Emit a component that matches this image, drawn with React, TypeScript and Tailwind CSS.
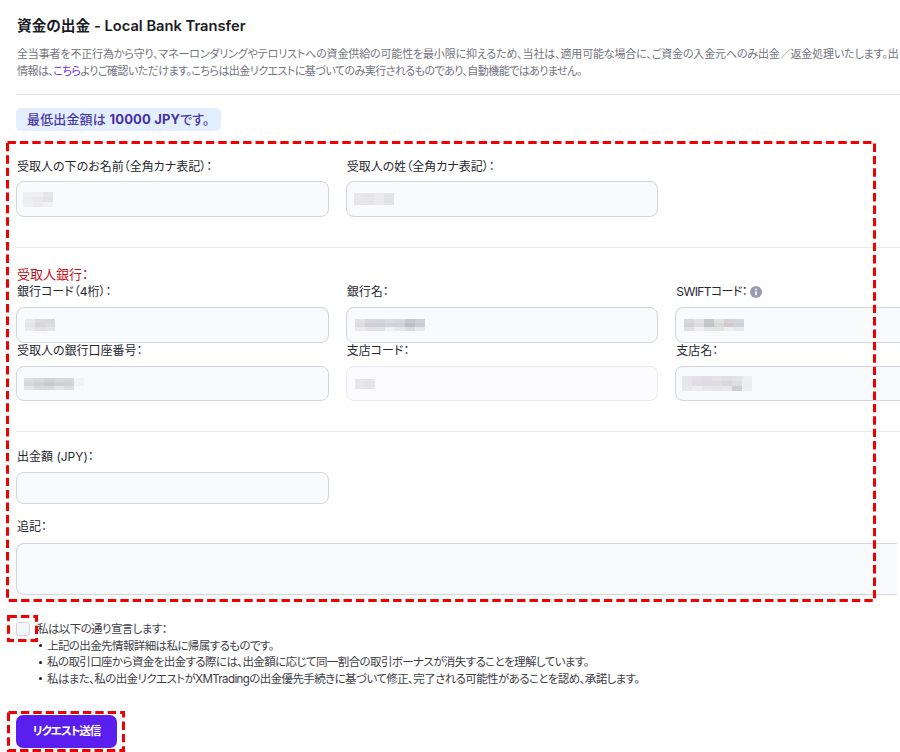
import type { ReactNode } from 'react';

type MosaicProps = {
  cell: [number, number];
  rows: string[][];
};

// pixelated patch that hides the personal data in the inputs
function Mosaic({ cell, rows }: MosaicProps) {
  const [w, h] = cell;
  return (
    <svg width={rows[0].length * w} height={rows.length * h} shapeRendering="crispEdges" className="block">
      {rows.map((row, y) =>
        row.map((c, x) => <rect key={`${x}-${y}`} x={x * w} y={y * h} width={w} height={h} fill={c} />),
      )}
    </svg>
  );
}

function Label({ children }: { children: ReactNode }) {
  return <label className="block pl-px text-[12px] leading-[16px] text-[#27272f]">{children}</label>;
}

function Field({
  label,
  pad = 'pl-[6px]',
  className = 'h-[36px]',
  gap = 'mt-[7px]',
  disabled,
  children,
}: {
  label: ReactNode;
  pad?: string;
  className?: string;
  gap?: string;
  disabled?: boolean;
  children?: ReactNode;
}) {
  return (
    <div className="flex flex-col">
      <Label>{label}</Label>
      <div
        className={`${className} ${pad} ${gap} flex items-center rounded-[8px] border ${
          disabled ? 'border-[#e9e9ef] bg-[#fcfcfe]' : 'border-[#d2d3de] bg-[#f9fafc]'
        }`}
      >
        {children}
      </div>
    </div>
  );
}

// red annotation frame drawn over the page
function Frame({ className, w, h }: { className: string; w: number; h: number }) {
  return (
    <svg className={`absolute ${className}`} width={w} height={h}>
      <rect x={1.5} y={1.5} width={w - 3} height={h - 3} fill="none" stroke="#f00000" strokeWidth={3} strokeDasharray="8.4 4" />
    </svg>
  );
}

const declarations = [
  '上記の出金先情報詳細は私に帰属するものです。',
  '私の取引口座から資金を出金する際には、出金額に応じて同一割合の取引ボーナスが消失することを理解しています。',
  '私はまた、私の出金リクエストがXMTradingの出金優先手続きに基づいて修正、完了される可能性があることを認め、承諾します。',
];

export default function App() {
  return (
    <div className="relative h-[752px] w-[900px] overflow-hidden bg-white font-['Inter','Noto_Sans_CJK_JP',sans-serif] [font-feature-settings:'palt']">
      <div className="w-[988px] pl-4">
        <h1 className="pt-[17px] pl-px text-[14.7px] leading-[18px] font-semibold text-[#1c1c24]">
          資金の出金 - Local Bank Transfer
        </h1>
        <p className="mt-[11px] pl-px text-[11px] leading-[17px] tracking-[-0.55px] whitespace-nowrap text-[#74747e]">
          <span className="tracking-[-0.15px]">
            全当事者を不正行為から守り、マネーロンダリングやテロリストへの資金供給の可能性を最小限に抑えるため、当社は、適用可能な場合に、ご資金の入金元へのみ出金／返金処理いたします。出
          </span>
          <br />
          情報は、<span className="text-[#6a2bea]">こちら</span>
          よりご確認いただけます。こちらは出金リクエストに基づいてのみ実行されるものであり、自動機能ではありません。
        </p>
        <hr className="mt-[14px] border-[#e5e5ec]" />

        <div className="mt-[13px] flex h-[23px] w-[205px] items-center rounded-[5px] bg-[#e3eeff] pl-[11px] text-[13px] font-medium tracking-[0.15px] text-[#4a3aa8]">
          最低出金額は&nbsp;<span className="font-bold text-[#43309f]">10000 JPY</span>です。
        </div>

        <div className="mt-[28px] grid grid-cols-3 gap-x-[17px]">
          <Field label="受取人の下のお名前（全角カナ表記）：" gap="mt-[6px]">
            <Mosaic
              cell={[10, 5]}
              rows={[
                ['#f0f0f3', '#f0f0f3', '#e6e6ea'],
                ['#ececf0', '#e9e9ed', '#e2e2e6'],
                ['#efeff2', '#ebebef', '#f0f0f3'],
              ]}
            />
          </Field>
          <Field label="受取人の姓（全角カナ表記）：" gap="mt-[6px]" pad="pl-[7px]">
            <Mosaic
              cell={[10, 6]}
              rows={[
                ['#e8e8ec', '#e6e6ea', '#ebebef', '#e4e4e8'],
                ['#e6e6ea', '#e5e5e9', '#e9e9ed', '#e2e2e6'],
              ]}
            />
          </Field>
        </div>

        <hr className="mt-[30px] border-[#e8e8ec]" />

        <h2 className="mt-[17px] pl-px text-[13px] leading-[19px] text-[#c0141c]">受取人銀行：</h2>
        <div className="grid grid-cols-3 gap-x-[17px]">
          <Field label="銀行コード（4桁）：" pad="pl-[8px]">
            <Mosaic
              cell={[10, 4]}
              rows={[
                ['#e8e8ec', '#dcdce0', '#d9d9dd'],
                ['#e4e4e8', '#d6d6da', '#dcdce0'],
                ['#eaeaee', '#e0e0e4', '#e4e4e8'],
              ]}
            />
          </Field>
          <Field label="銀行名：" pad="pl-[8px]">
            <Mosaic
              cell={[10, 4]}
              rows={[
                ['#e2e2e6', '#d8d6da', '#d4d6dc', '#dcdce0', '#d8d8dc', '#c8c8cc', '#ccd0d8'],
                ['#dcdce0', '#cfcdd2', '#cdd0d6', '#d4d4d8', '#d2d2d6', '#bfbfc3', '#c8ccd4'],
                ['#eaeaee', '#e2e0e4', '#dfe1e6', '#f0f0f3', '#e6e6ea', '#dcdce0', '#e6e8ec'],
              ]}
            />
          </Field>
          <Field
            label={
              <span className="flex items-center">
                <span className="tracking-[-0.6px]">SWIFTコード：</span>
                <svg viewBox="0 0 12 12" className="ml-[3px] size-3">
                  <circle cx="6" cy="6" r="6" fill="#9a9db2" />
                  <rect x="5.2" y="2.6" width="1.6" height="1.6" fill="#fff" />
                  <rect x="5.2" y="5.2" width="1.6" height="4" fill="#fff" />
                </svg>
              </span>
            }
            pad="pl-[8px]"
          >
            <Mosaic
              cell={[10, 4]}
              rows={[
                ['#d9d9dc', '#e2e2e5', '#c8c8cc', '#e0e0e3', '#d8d2d6', '#d0d8dc'],
                ['#d2d2d6', '#dcdcdf', '#c2c2c6', '#d8dad8', '#d0cace', '#c8d2d8'],
                ['#e0e0e3', '#eeeef0', '#e4e4e7', '#e2e4e2', '#eeeef0', '#e6e8ec'],
              ]}
            />
          </Field>
          <Field label="受取人の銀行口座番号：" pad="pl-[7px]" className="h-[35px]">
            <Mosaic
              cell={[10, 4]}
              rows={[
                ['#dededf', '#d9d9dc', '#d4d4d8', '#d8d8dc', '#d8d8dc', '#f4f4f6'],
                ['#d6d6da', '#d0d0d4', '#c9c9cd', '#cfcfd3', '#d2d2d6', '#f2f2f5'],
                ['#e4e4e8', '#dcdce0', '#dadade', '#e4e4e6', '#dedee2', '#f8f8fa'],
              ]}
            />
          </Field>
          <Field label="支店コード：" pad="pl-[8px]" className="h-[35px]" disabled>
            <Mosaic cell={[10, 10]} rows={[['#e6e6ea', '#e4e4e8']]} />
          </Field>
          <Field label="支店名：" pad="pl-[6px]" className="h-[35px]">
            <Mosaic
              cell={[10, 5]}
              rows={[
                ['#e6e6ea', '#e2dfe5', '#dfdce3', '#e4e4e6', '#e0e0e4', '#e4e4e8', '#eeeef1'],
                ['#e6e6ea', '#e0dde4', '#dedbe2', '#dddedd', '#d8d8dc', '#dedee2', '#ecedf0'],
                ['#e8e8ec', '#eeeef1', '#e8e8ec', '#e6e6e9', '#e8e8ec', '#cfcfd3', '#eeeef1'],
              ]}
            />
          </Field>
        </div>

        <hr className="mt-[30px] border-[#e8e8ec]" />

        <div className="mt-[17px] grid grid-cols-3 gap-x-[17px]">
          <Field label="出金額 (JPY)：" className="h-[32px]" />
        </div>

        <div className="mt-[15px]">
          <Label>追記：</Label>
          <div className="mt-[8px] h-[52px] w-[881px] rounded-l-[8px] border border-r-0 border-[#d2d3de] bg-[#f9fafc]" />
        </div>

        <div className="mt-[26px] flex items-start">
          <span className="mt-[1px] size-[14px] rounded-[3px] border border-[#d2d3de] bg-[#f4f5f8]" />
          <div className="ml-[7px] text-[11.5px] leading-[16.5px] tracking-[-0.6px] whitespace-nowrap text-[#3e3e46]">
            <p>私は以下の通り宣言します：</p>
            <ul>
              {declarations.map((text) => (
                <li key={text} className="flex items-center">
                  <span className="mr-[5px] ml-[2px] size-[3px] rounded-full bg-[#1c1c24]" />
                  {text}
                </li>
              ))}
            </ul>
          </div>
        </div>

        <button className="mt-[28px] flex h-[33px] w-[101px] items-center justify-center rounded-[7px] bg-[#5a1fee] text-[11.5px] font-bold tracking-[-1px] text-white">
          リクエスト送信
        </button>
      </div>

      <Frame className="top-[141px] left-[6px]" w={870} h={461} />
      <Frame className="top-[615px] left-[7px]" w={31} h={27} />
      <Frame className="top-[711px] left-[7px]" w={118} h={41} />
    </div>
  );
}
